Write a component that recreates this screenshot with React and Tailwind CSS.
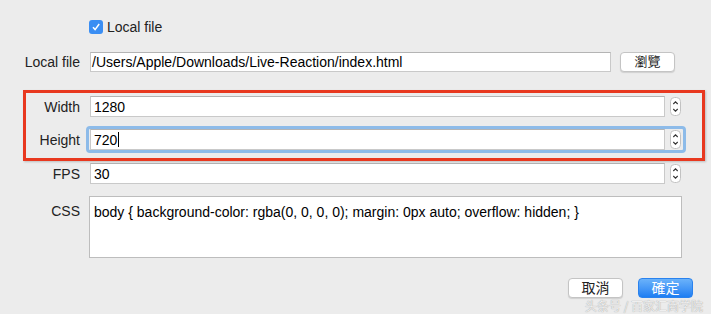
import React from "react";

function Stepper() {
  return (
    <svg width="11" height="19" viewBox="0 0 11 19" className="ml-[5px] shrink-0">
      <rect x="0.5" y="0.5" width="10" height="18" rx="4" fill="#fff" stroke="#c2c2c2" />
      <path d="M3.3 7 L5.5 4.8 L7.7 7" fill="none" stroke="#333" strokeWidth="1.1" />
      <path d="M3.3 12 L5.5 14.2 L7.7 12" fill="none" stroke="#333" strokeWidth="1.1" />
    </svg>
  );
}

function Label({ children }) {
  return <div className="w-[80px] shrink-0 text-right text-[#222]">{children}</div>;
}

function NumberRow({ label, value, focused, className }) {
  return (
    <div className={"flex items-center " + className}>
      <Label>{label}</Label>
      <div className="relative ml-[10px] flex items-center">
        {focused && (
          <div className="absolute left-[-4px] right-[-5px] top-[-3px] bottom-[-3px] border-[3px] border-[#8dbbe9] rounded-[4px] pointer-events-none" />
        )}
        <div className="w-[575px] h-[21px] bg-white border border-[#c9c9c9] border-t-[#b4b4b4] flex items-center pl-[3px] text-black">
          {value}
          {focused && <span className="inline-block w-[1px] h-[15px] bg-black ml-[1px]" />}
        </div>
        <Stepper />
      </div>
    </div>
  );
}

export default function App() {
  return (
    <div className="relative w-[711px] h-[314px] bg-[#ececec] overflow-hidden text-[14px] leading-[16px] font-['Liberation_Sans','Noto_Sans_CJK_TC',sans-serif]">
      <div className="flex items-center h-[16px] mt-[19px] pl-[89px]">
        <div className="w-[14px] h-[14px] rounded-[3px] bg-[#3a8ef3] flex items-center justify-center">
          <svg width="10" height="10" viewBox="0 0 10 10">
            <path d="M2 5.2 L4.1 7.6 L8.2 2" fill="none" stroke="#fff" strokeWidth="1.5" />
          </svg>
        </div>
        <span className="ml-[4px] text-[#222]">Local file</span>
      </div>

      <div className="flex items-center mt-[17px]">
        <Label>Local file</Label>
        <div className="ml-[10px] w-[521px] h-[20px] bg-white border border-[#c9c9c9] border-t-[#b4b4b4] flex items-center pl-[1px] text-black">
          /Users/Apple/Downloads/Live-Reaction/index.html
        </div>
        <div className="ml-[9px] w-[55px] h-[20px] bg-white border border-[#c4c4c4] rounded-[4px] shadow-[0_1px_1px_rgba(0,0,0,0.12)] flex items-center justify-center text-[13px] text-[#222]">
          瀏覽
        </div>
      </div>

      <NumberRow label="Width" value="1280" className="mt-[24px]" />
      <NumberRow label="Height" value="720" focused className="mt-[12px]" />
      <NumberRow label="FPS" value="30" className="mt-[13px]" />

      <div className="flex items-start mt-[12px]">
        <div className="w-[80px] shrink-0 text-right pt-[7px] text-[#222]">CSS</div>
        <div className="ml-[9px] w-[593px] h-[62px] bg-white border border-[#bdbdbd] pt-[7px] pl-[4px] text-black">
          body {"{"} background-color: rgba(0, 0, 0, 0); margin: 0px auto; overflow: hidden; {"}"}
        </div>
      </div>

      <div className="flex justify-end items-center mt-[20px] pr-[18px] gap-[15px]">
        <div className="w-[55px] h-[20px] bg-white border border-[#c4c4c4] rounded-[4px] shadow-[0_1px_1px_rgba(0,0,0,0.12)] flex items-center justify-center text-[14px] text-[#222]">
          取消
        </div>
        <div className="w-[55px] h-[20px] rounded-[4px] bg-gradient-to-b from-[#6ab2fa] to-[#1d7ef2] border border-[#2a82ee] flex items-center justify-center text-[14px] text-white">
          確定
        </div>
      </div>

      <div className="absolute left-[585px] top-[298px] whitespace-nowrap text-[12px] leading-[15px] text-[#efefef] font-['Noto_Sans_CJK_SC',sans-serif] [text-shadow:0_0_1px_#8a8a8a] pointer-events-none">
        头条号 / 百家汇商学院
      </div>

      <div className="absolute left-[23px] top-[90px] w-[682px] h-[71px] border-[3px] border-[#e8381f] shadow-[1px_1px_2px_rgba(0,0,0,0.2)] pointer-events-none" />
    </div>
  );
}
